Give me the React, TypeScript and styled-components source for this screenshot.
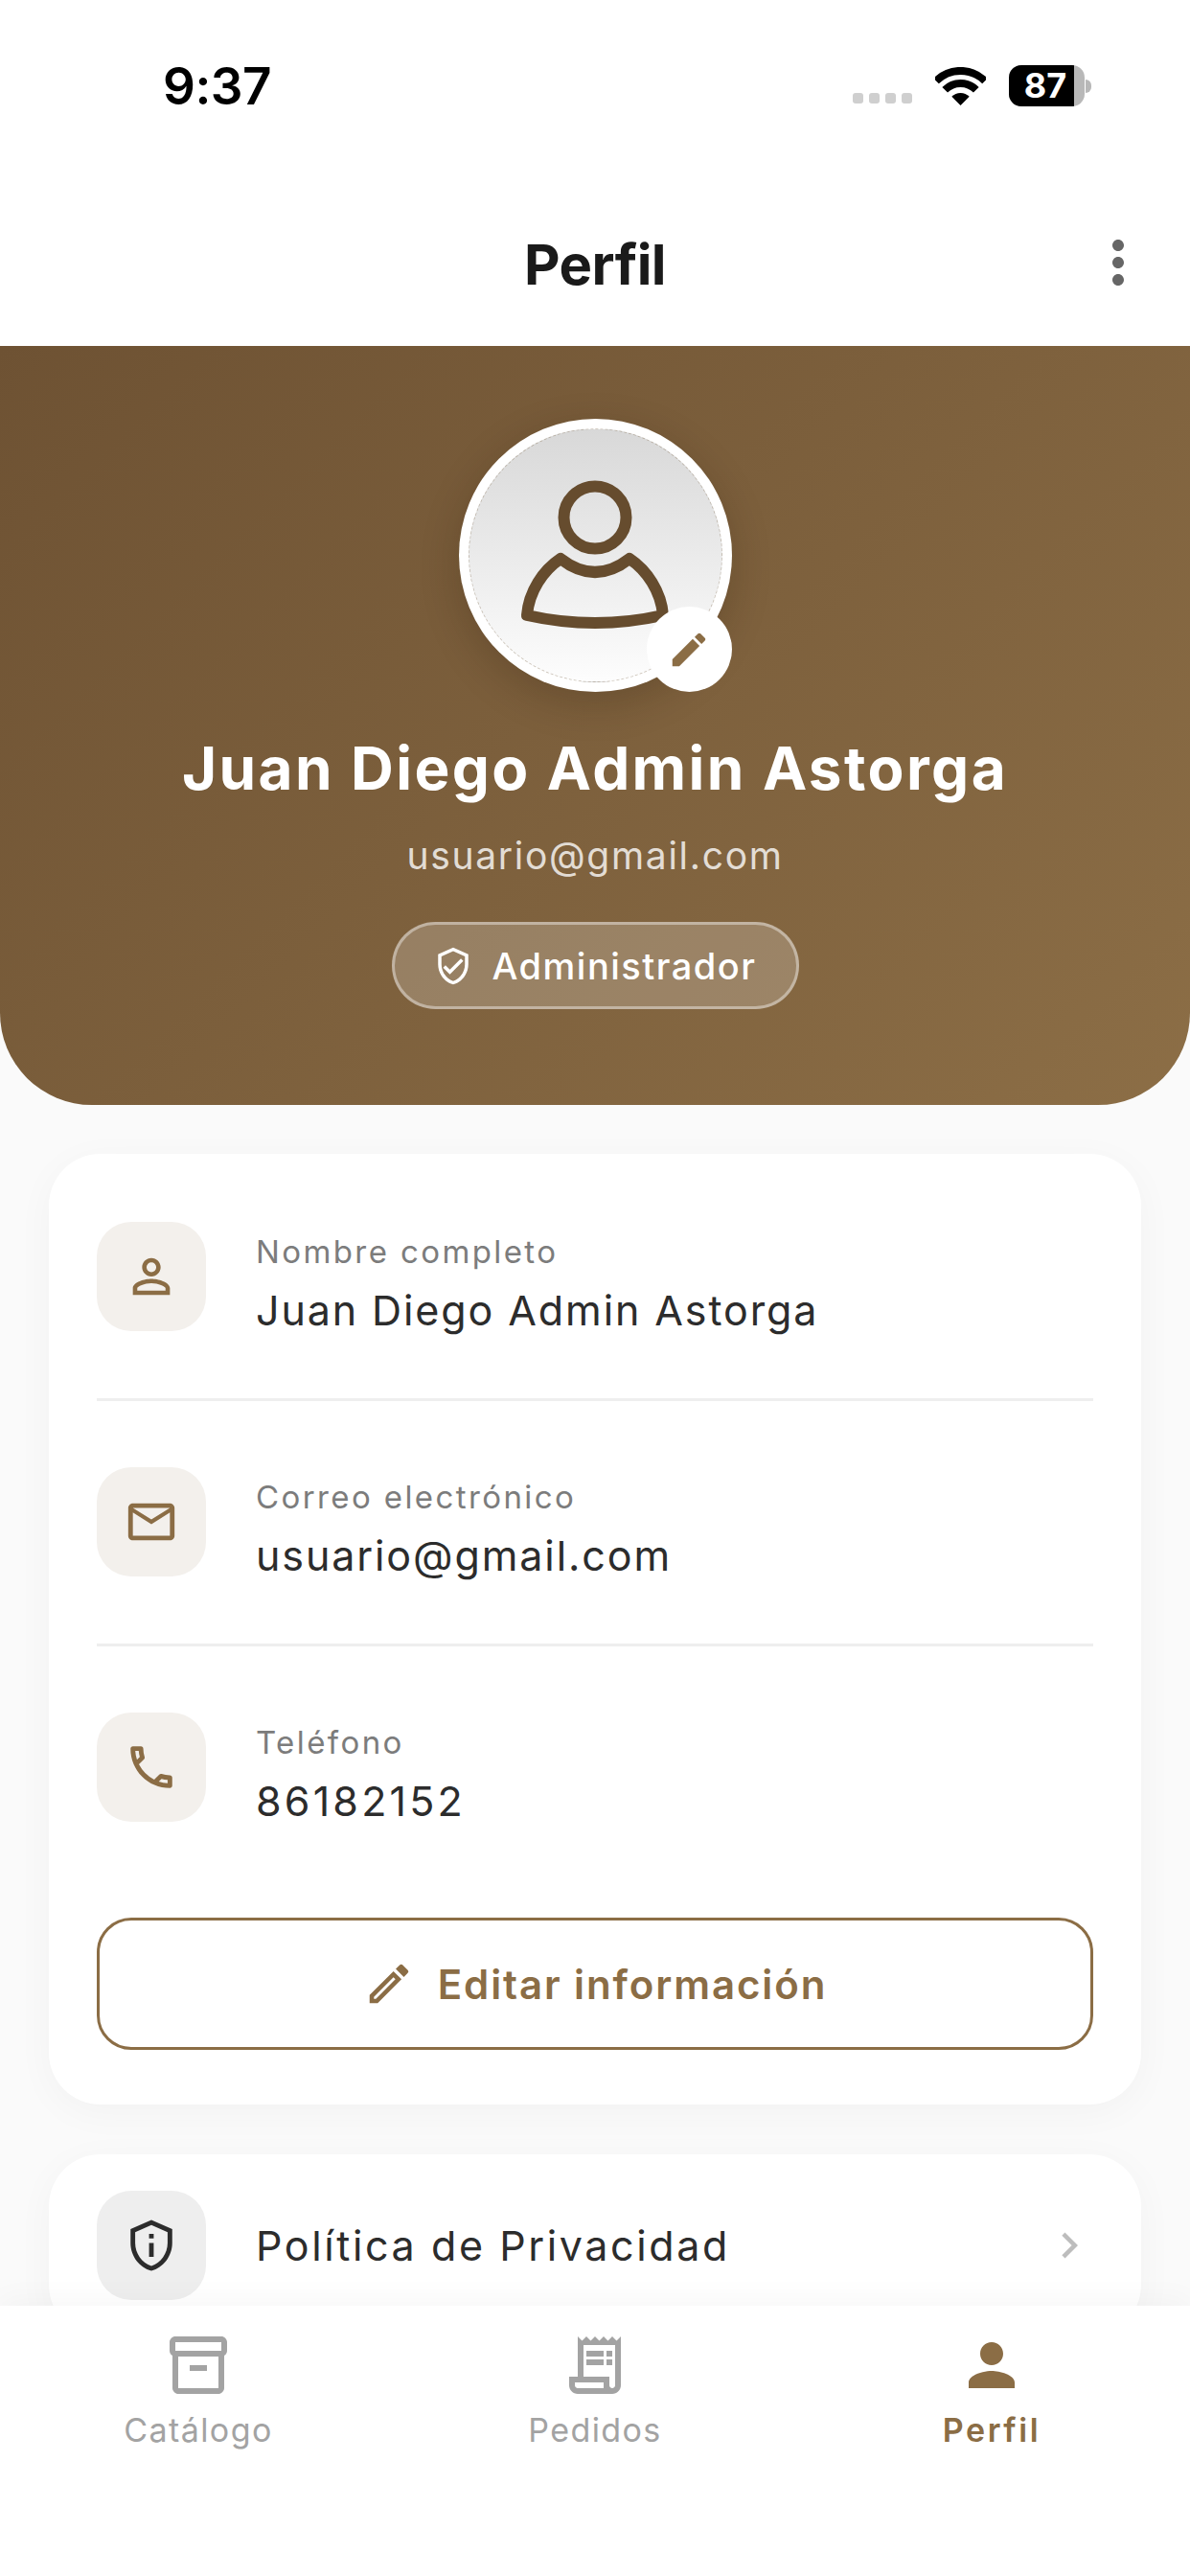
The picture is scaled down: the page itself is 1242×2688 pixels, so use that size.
import React from "react";
import styled, { createGlobalStyle } from "styled-components";
import {
  MdChevronRight,
  MdEdit,
  MdMoreVert,
  MdOutlineEdit,
  MdOutlineInventory2,
  MdOutlineMailOutline,
  MdOutlinePersonOutline,
  MdOutlinePhone,
  MdOutlinePrivacyTip,
  MdOutlineReceiptLong,
  MdOutlineVerifiedUser,
  MdPerson,
} from "react-icons/md";

const BROWN = "#8b6d45";

const Global = createGlobalStyle`
  html, body { margin: 0; padding: 0; background: #fafafa; }
  * { box-sizing: border-box; }
  body { font-family: Inter, "Noto Sans", sans-serif; }
`;

const Screen = styled.div`
  width: 1242px;
  height: 2688px;
  display: flex;
  flex-direction: column;
  overflow: hidden;
  background: #fafafa;
`;

const StatusBar = styled.div`
  height: 190px;
  flex: none;
  background: #fff;
  display: flex;
  align-items: flex-start;
  justify-content: space-between;
  padding: 60px 103px 0 170px;
`;

const Time = styled.div`
  font-size: 53px;
  line-height: 60px;
  font-weight: 600;
  color: #000;
  letter-spacing: -0.5px;
`;

const StatusIcons = styled.div`
  display: flex;
  align-items: flex-end;
  padding-top: 8px;
`;

const SignalDots = styled.div`
  display: flex;
  gap: 6px;
  margin: 0 24px 3px 0;
`;

const SignalDot = styled.span`
  width: 11px;
  height: 11px;
  border-radius: 3px;
  background: #cfcfcf;
`;

const WifiGlyph = styled.svg`
  width: 53px;
  height: 40px;
  margin: 0 24px 1px 0;
  display: block;
`;

const Battery = styled.div`
  display: flex;
  align-items: center;
`;

const BatteryBody = styled.div`
  width: 79px;
  height: 43px;
  border-radius: 13px;
  overflow: hidden;
  display: flex;
  background: #b8b8b8;
`;

const BatteryLevel = styled.div`
  width: 68px;
  background: #000;
  color: #fff;
  font-size: 36px;
  font-weight: 700;
  line-height: 43px;
  text-align: center;
  padding-left: 8px;
`;

const BatteryTip = styled.div`
  width: 6px;
  height: 14px;
  margin-left: 1px;
  border-radius: 0 7px 7px 0;
  background: #b8b8b8;
`;

const AppBar = styled.div`
  height: 171px;
  flex: none;
  background: #fff;
  display: grid;
  grid-template-columns: 1fr auto 1fr;
  align-items: center;
  padding: 0 40px;
`;

const Title = styled.h1`
  grid-column: 2;
  margin: 0;
  font-size: 58px;
  font-weight: 700;
  color: #1a1a1a;
  letter-spacing: -0.6px;
`;

const MenuIcon = styled(MdMoreVert)`
  justify-self: end;
  font-size: 72px;
  color: #666;
  margin: -4px -1px 0 0;
`;

const Content = styled.main`
  flex: 1;
  min-height: 0;
  overflow: hidden;
`;

const Hero = styled.section`
  height: 792px;
  background: linear-gradient(135deg, #6e5233 0%, #8c6e46 100%);
  border-radius: 0 0 96px 96px;
  padding-top: 76px;
  display: flex;
  flex-direction: column;
  align-items: center;
`;

const AvatarWrap = styled.div`
  position: relative;
  width: 285px;
  height: 285px;
  border-radius: 50%;
  background: #fff;
  padding: 10px;
  box-shadow: 0 12px 40px rgba(40, 25, 10, 0.22);
`;

const AvatarDisc = styled.div`
  width: 100%;
  height: 100%;
  border-radius: 50%;
  border: 1px dashed rgba(110, 85, 50, 0.3);
  background: linear-gradient(180deg, #d8d8d8 0%, #fdfdfd 100%);
`;

const AvatarGlyph = styled.svg`
  position: absolute;
  inset: 0;
  width: 285px;
  height: 285px;
`;

const EditBadge = styled.div`
  position: absolute;
  right: 0;
  bottom: 0;
  width: 89px;
  height: 89px;
  border-radius: 50%;
  background: #fff;
  color: ${BROWN};
  display: flex;
  align-items: center;
  justify-content: center;
  font-size: 46px;
`;

const HeroName = styled.h2`
  margin: 44px 0 0;
  font-size: 62px;
  line-height: 72px;
  font-weight: 650;
  color: #fff;
  letter-spacing: 2.4px;
`;

const HeroEmail = styled.div`
  margin-top: 31px;
  font-size: 39px;
  line-height: 48px;
  color: rgba(255, 255, 255, 0.8);
  letter-spacing: 1.7px;
`;

const RoleBadge = styled.div`
  margin-top: 45px;
  width: 425px;
  height: 91px;
  border-radius: 46px;
  background: rgba(255, 255, 255, 0.2);
  border: 3px solid rgba(255, 255, 255, 0.4);
  color: #fff;
  display: flex;
  align-items: center;
  justify-content: center;
  gap: 19px;
  font-size: 38px;
  font-weight: 500;
  letter-spacing: 1.5px;
  svg { font-size: 42px; }
`;

const Card = styled.section`
  margin: 51px 51px 0;
  background: #fff;
  border-radius: 54px;
  padding: 71px 50px 57px;
  box-shadow: 0 8px 40px rgba(0, 0, 0, 0.035);
`;

const InfoRow = styled.div`
  display: flex;
  align-items: flex-start;
  gap: 52px;
  padding-bottom: 70px;
  margin-bottom: 69px;
  border-bottom: 3px solid #eeeeee;
  &:last-of-type {
    border-bottom: none;
    padding-bottom: 0;
    margin-bottom: 100px;
  }
`;

const IconTile = styled.div<{ $neutral?: boolean }>`
  width: 114px;
  height: 114px;
  flex: none;
  border-radius: 36px;
  background: ${(p) => (p.$neutral ? "#eeeeee" : "#f3f0ec")};
  color: ${(p) => (p.$neutral ? "#2c2c2c" : BROWN)};
  display: flex;
  align-items: center;
  justify-content: center;
  font-size: 58px;
`;

const InfoText = styled.div`
  height: 114px;
  display: flex;
  flex-direction: column;
  gap: 16px;
  padding-top: 11px;
`;

const InfoLabel = styled.div`
  font-size: 33px;
  line-height: 40px;
  color: #7c7c7c;
  letter-spacing: 2.4px;
`;

const InfoValue = styled.div<{ $wide?: boolean }>`
  font-size: 43px;
  line-height: 50px;
  font-weight: 400;
  color: #2c2c2c;
  letter-spacing: ${(p) => (p.$wide ? "3.2px" : "1.9px")};
`;

const OutlineButton = styled.button`
  width: 100%;
  height: 138px;
  border: 3px solid ${BROWN};
  border-radius: 36px;
  background: #fff;
  color: ${BROWN};
  display: flex;
  align-items: center;
  justify-content: center;
  gap: 24px;
  font-family: inherit;
  font-size: 42px;
  font-weight: 600;
  letter-spacing: 1.9px;
  svg { font-size: 54px; }
`;

const LinkCard = styled(Card)`
  margin-top: 52px;
  padding: 38px 50px;
`;

const LinkRow = styled.div`
  display: flex;
  align-items: center;
  gap: 52px;
`;

const LinkLabel = styled(InfoValue)`
  flex: 1;
  letter-spacing: 2.6px;
`;

const Chevron = styled(MdChevronRight)`
  font-size: 54px;
  color: #bdbdbd;
  margin-right: -2px;
`;

const TabBar = styled.nav`
  position: relative;
  z-index: 1;
  height: 282px;
  flex: none;
  background: #fff;
  box-shadow: 0 -6px 30px rgba(0, 0, 0, 0.035);
  display: grid;
  grid-template-columns: repeat(3, 1fr);
  padding-top: 26px;
`;

const Tab = styled.div<{ $active?: boolean }>`
  display: flex;
  flex-direction: column;
  align-items: center;
  gap: 12px;
  color: ${(p) => (p.$active ? BROWN : "#a3a3a3")};
  font-size: 34px;
  line-height: 40px;
  font-weight: ${(p) => (p.$active ? 600 : 400)};
  letter-spacing: ${(p) => (p.$active ? "2.6px" : "1.4px")};
  svg { font-size: 72px; }
`;

const rows = [
  { icon: <MdOutlinePersonOutline />, label: "Nombre completo", value: "Juan Diego Admin Astorga" },
  { icon: <MdOutlineMailOutline />, label: "Correo electrónico", value: "usuario@gmail.com" },
  { icon: <MdOutlinePhone />, label: "Teléfono", value: "86182152", wide: true },
];

export default function App() {
  return (
    <Screen>
      <Global />
      <StatusBar>
        <Time>9:37</Time>
        <StatusIcons>
          <SignalDots>
            <SignalDot />
            <SignalDot />
            <SignalDot />
            <SignalDot />
          </SignalDots>
          <WifiGlyph viewBox="0 0 53 40">
            <g fill="none" stroke="#000" strokeWidth="8">
              <path d="M1 14.5A36 36 0 0 1 52 14.5" />
              <path d="M10.2 23.7A23 23 0 0 1 42.8 23.7" />
            </g>
            <path d="M26.5 40L17.3 30.8A13 13 0 0 1 35.7 30.8Z" fill="#000" />
          </WifiGlyph>
          <Battery>
            <BatteryBody>
              <BatteryLevel>87</BatteryLevel>
            </BatteryBody>
            <BatteryTip />
          </Battery>
        </StatusIcons>
      </StatusBar>
      <AppBar>
        <Title>Perfil</Title>
        <MenuIcon />
      </AppBar>
      <Content>
        <Hero>
          <AvatarWrap>
            <AvatarDisc />
            <AvatarGlyph viewBox="0 0 285 285">
              <g fill="none" stroke="#664c2e" strokeWidth="12" strokeLinejoin="round">
                <circle cx="142" cy="103" r="32.5" />
                <path d="M71 205C73 180 88 158 106 146Q142 174 178 146C196 158 211 180 213 205Q142 221 71 205Z" />
              </g>
            </AvatarGlyph>
            <EditBadge>
              <MdEdit />
            </EditBadge>
          </AvatarWrap>
          <HeroName>Juan Diego Admin Astorga</HeroName>
          <HeroEmail>usuario@gmail.com</HeroEmail>
          <RoleBadge>
            <MdOutlineVerifiedUser />
            Administrador
          </RoleBadge>
        </Hero>
        <Card>
          {rows.map((r) => (
            <InfoRow key={r.label}>
              <IconTile>{r.icon}</IconTile>
              <InfoText>
                <InfoLabel>{r.label}</InfoLabel>
                <InfoValue $wide={r.wide}>{r.value}</InfoValue>
              </InfoText>
            </InfoRow>
          ))}
          <OutlineButton>
            <MdOutlineEdit />
            Editar información
          </OutlineButton>
        </Card>
        <LinkCard>
          <LinkRow>
            <IconTile $neutral>
              <MdOutlinePrivacyTip />
            </IconTile>
            <LinkLabel>Política de Privacidad</LinkLabel>
            <Chevron />
          </LinkRow>
        </LinkCard>
      </Content>
      <TabBar>
        <Tab>
          <MdOutlineInventory2 />
          Catálogo
        </Tab>
        <Tab>
          <MdOutlineReceiptLong />
          Pedidos
        </Tab>
        <Tab $active>
          <MdPerson />
          Perfil
        </Tab>
      </TabBar>
    </Screen>
  );
}
